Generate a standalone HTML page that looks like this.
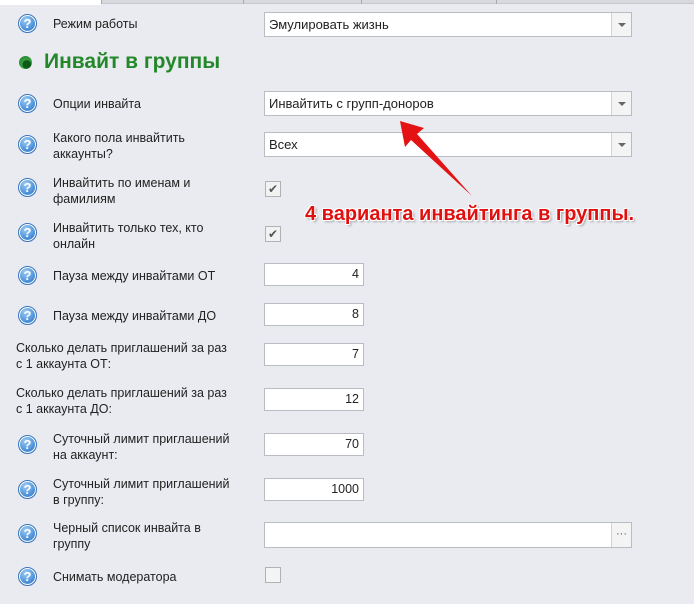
<!DOCTYPE html>
<html><head><meta charset="utf-8"><style>
*{margin:0;padding:0;box-sizing:border-box}
body{width:694px;height:604px;background:#e9ebf0;font-family:"Liberation Sans","DejaVu Sans",sans-serif;font-size:12.5px;color:#222;position:relative;overflow:hidden}
.a{position:absolute}
.q{position:absolute;left:18px;width:19px;height:19px;border-radius:50%;background:radial-gradient(circle at 40% 30%,#9ccbf4,#4a90d8 60%,#2a6cb8);border:1px solid #3a76bd;box-shadow:0 0 0 1px #fff inset;color:#fff;font-weight:bold;font-size:13px;text-align:center;line-height:17px}
.l{position:absolute;left:53px;line-height:16px}
.cb{position:absolute;left:264px;width:368px;height:25px;background:#fff;border:1px solid #b9bcc2}
.cb span{position:absolute;left:4px;top:4px;font-size:13px}
.cb i{position:absolute;right:0;top:0;width:20px;height:23px;border-left:1px solid #d0d2d6;background:#f4f4f5}
.cb i.d:after{content:"";position:absolute;left:6px;top:10px;border-left:4px solid transparent;border-right:4px solid transparent;border-top:4px solid #666}
.t{position:absolute;left:264px;width:100px;height:23px;background:#fff;border:1px solid #b9bcc2;text-align:right;padding-right:4px;line-height:21px;font-size:12.5px}
.ck{position:absolute;left:265px;width:16px;height:16px;border:1px solid #b0b2b6;background:#f2f2f2;font-size:12px;line-height:14px;text-align:center;color:#555}
</style></head><body>
<div class="a" style="left:0;top:0;width:694px;height:4px;background:#d7d9de;border-bottom:1px solid #c6c8cc"></div>
<div class="a" style="left:0;top:0;width:101px;height:5px;background:#fff"></div>
<div class="a" style="left:101px;top:0;width:1px;height:4px;background:#a8aab0"></div>
<div class="a" style="left:243px;top:0;width:1px;height:4px;background:#a8aab0"></div>
<div class="a" style="left:361px;top:0;width:1px;height:4px;background:#a8aab0"></div>
<div class="a" style="left:496px;top:0;width:1px;height:4px;background:#a8aab0"></div>

<div class="q" style="top:14px">?</div><div class="l" style="top:16px">Режим работы</div>
<div class="cb" style="top:12px"><span>Эмулировать жизнь</span><i class="d"></i></div>

<div class="a" style="left:19px;top:56px;width:13px;height:13px;border-radius:50%;background:radial-gradient(circle at 60% 65%,#0c5a18 35%,#3aa040 40%,#1e7a2a)"></div>
<div class="a" style="left:44px;top:50px;font-size:21px;font-weight:bold;color:#23882a">Инвайт в группы</div>

<div class="q" style="top:94px">?</div><div class="l" style="top:96px">Опции инвайта</div>
<div class="cb" style="top:91px"><span>Инвайтить с групп-доноров</span><i class="d"></i></div>

<div class="q" style="top:135px">?</div><div class="l" style="top:130px">Какого пола инвайтить<br>аккаунты?</div>
<div class="cb" style="top:132px"><span>Всех</span><i class="d"></i></div>

<div class="q" style="top:178px">?</div><div class="l" style="top:175px">Инвайтить по именам и<br>фамилиям</div>
<div class="ck" style="top:181px">✔</div>

<div class="q" style="top:223px">?</div><div class="l" style="top:220px">Инвайтить только тех, кто<br>онлайн</div>
<div class="ck" style="top:226px">✔</div>

<div class="q" style="top:266px">?</div><div class="l" style="top:268px">Пауза между инвайтами ОТ</div>
<div class="t" style="top:263px">4</div>

<div class="q" style="top:306px">?</div><div class="l" style="top:308px">Пауза между инвайтами ДО</div>
<div class="t" style="top:303px">8</div>

<div class="a" style="left:16px;top:340px;line-height:16px">Сколько делать приглашений за раз<br>с 1 аккаунта ОТ:</div>
<div class="t" style="top:343px">7</div>
<div class="a" style="left:16px;top:385px;line-height:16px">Сколько делать приглашений за раз<br>с 1 аккаунта ДО:</div>
<div class="t" style="top:388px">12</div>

<div class="q" style="top:435px">?</div><div class="l" style="top:431px">Суточный лимит приглашений<br>на аккаунт:</div>
<div class="t" style="top:433px">70</div>

<div class="q" style="top:480px">?</div><div class="l" style="top:476px">Суточный лимит приглашений<br>в группу:</div>
<div class="t" style="top:478px">1000</div>

<div class="q" style="top:524px">?</div><div class="l" style="top:520px">Черный список инвайта в<br>группу</div>
<div class="cb" style="top:522px;height:26px"><i style="height:24px;background:#f4f4f5;font-style:normal;font-size:11px;color:#555;text-align:center;line-height:22px">···</i></div>

<div class="q" style="top:567px">?</div><div class="l" style="top:569px">Снимать модератора</div>
<div class="ck" style="top:567px;background:#f4f4f4"></div>

<svg class="a" style="left:0;top:0" width="694" height="604">
<polygon points="400,121 424,128 417,134 472,196 411,140 405,147" fill="#e41212"/>
</svg>
<div class="a" style="left:305px;top:203px;font-size:20px;font-weight:bold;color:#e01010;text-shadow:1px 1px 0 #fff,-1px -1px 0 #fff,1px -1px 0 #fff,-1px 1px 0 #fff,2px 2px 2px rgba(0,0,0,.3)">4 варианта инвайтинга в группы.</div>
</body></html>
